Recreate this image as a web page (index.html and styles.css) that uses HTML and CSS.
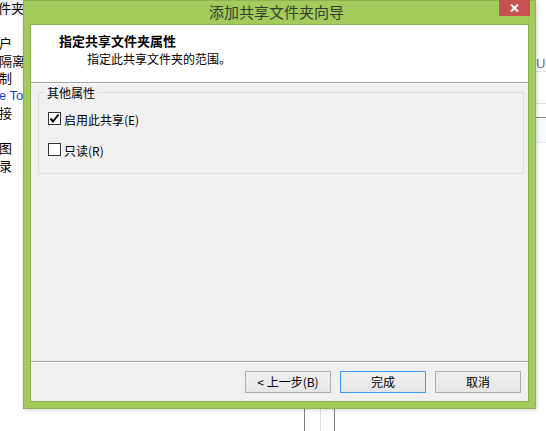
FILE: index.html
```html
<!DOCTYPE html>
<html lang="zh-CN">
<head>
    <meta charset="UTF-8">
    <meta name="viewport" content="width=device-width, initial-scale=1.0">
    <title>添加共享文件夹向导</title>
    <link rel="stylesheet" href="styles.css">
</head>
<body>
    <!-- 背后的资源管理器 -->
    <div class="explorer">
        <div class="nav">
            <div class="nav-head">件夹</div>
            <ul class="nav-list">
                <li>户</li>
                <li>隔离</li>
                <li>制</li>
                <li class="link">e To</li>
                <li>接</li>
                <li>&nbsp;</li>
                <li>图</li>
                <li>录</li>
            </ul>
        </div>
        <div class="pane">
            <div class="pane-text">U)</div>
            <div class="pane-row"></div>
            <div class="pane-sel"></div>
        </div>
        <div class="cols">
            <span class="col-dark"></span>
            <span class="col-light"></span>
            <span class="col-dark"></span>
        </div>
    </div>

    <!-- 向导窗口 -->
    <div class="wizard">
        <div class="titlebar">
            <span></span>
            <span class="title">添加共享文件夹向导</span>
            <button type="button" class="close">
                <svg width="9" height="8" viewBox="0 0 9 8"><path d="M1 0.5 L8 7.5 M8 0.5 L1 7.5" stroke="#fff" stroke-width="2"/></svg>
            </button>
        </div>
        <div class="client">
            <div class="header">
                <h1 class="header-title">指定共享文件夹属性</h1>
                <p class="header-sub">指定此共享文件夹的范围。</p>
            </div>
            <div class="body">
                <div class="group">
                    <div class="group-title">其他属性</div>
                    <label class="check-row first">
                        <span class="box">
                            <svg width="11" height="11" viewBox="0 0 11 11"><path d="M1.5 5.5 L4 8.5 L9.5 1.5" fill="none" stroke="#000" stroke-width="2"/></svg>
                        </span>
                        启用此共享(E)
                    </label>
                    <label class="check-row">
                        <span class="box"></span>
                        只读(R)
                    </label>
                </div>
            </div>
            <div class="footer">
                <button type="button" class="btn">&lt;&nbsp;上一步(B)</button>
                <button type="button" class="btn default">完成</button>
                <button type="button" class="btn">取消</button>
            </div>
        </div>
    </div>
</body>
</html>
```

FILE: styles.css
```css
* {
    box-sizing: border-box;
}

body {
    margin: 0;
    background: #fff;
    font-family: "Noto Sans CJK SC", sans-serif;
    font-size: 12px;
    color: #000;
    position: relative;
    overflow: hidden;
}

/* 资源管理器背景 */
.explorer {
    width: 546px;
    height: 431px;
    display: grid;
    grid-template-columns: 23px 1fr 10px;
    grid-template-rows: 1fr 22px;
    overflow: hidden;
}

.nav {
    grid-column: 1;
    grid-row: 1;
    white-space: nowrap;
    font-size: 13px;
}

.nav-head {
    height: 16px;
    line-height: 16px;
    background: #f0f0f0;
    margin-left: -2px;
}

.nav-list {
    list-style: none;
    margin: 18px 0 0;
    padding: 0;
    line-height: 17.5px;
}

.nav-list li {
    margin-left: -1px;
}

.nav-list .link {
    color: #1a3fd0;
    font-family: "Liberation Sans", sans-serif;
}

.pane {
    grid-column: 3;
    grid-row: 1;
}

.pane-text {
    margin-top: 56px;
    height: 16px;
    line-height: 16px;
    color: #5a6aa0;
    font-family: "Liberation Sans", sans-serif;
    font-size: 13px;
    border-bottom: 1px solid #e0e0e0;
}

.pane-row {
    height: 32px;
    border-bottom: 1px solid #e0e0e0;
}

.pane-sel {
    margin-top: 13px;
    height: 26px;
    border-top: 1px solid #8a8a8a;
    border-bottom: 1px solid #dde8f4;
    background: #f7fafd;
}

.cols {
    grid-column: 2;
    grid-row: 2;
    display: flex;
    padding-left: 281px;
}

.cols span {
    width: 1px;
    height: 100%;
}

.col-dark {
    background: #7f7f7f;
}

.col-light {
    background: #dcdcdc;
    margin: 0 13px 0 15px;
}

/* 向导窗口 */
.wizard {
    position: absolute;
    left: 23px;
    top: 0;
    width: 513px;
    height: 409px;
    background: #a2cb5c;
    border: 1px solid #8db352;
    padding: 0 6px 6px;
    display: flex;
    flex-direction: column;
    box-shadow: 1px 1px 4px rgba(0, 0, 0, 0.18);
}

.titlebar {
    height: 23px;
    display: grid;
    grid-template-columns: 1fr auto 1fr;
    align-items: start;
}

.title {
    font-size: 15px;
    line-height: 22px;
    color: #363d30;
    margin-right: 6px;
}

.close {
    justify-self: end;
    width: 31px;
    height: 16px;
    margin: -1px -1px 0 0;
    padding: 0;
    border: 0;
    background: #c75050;
    display: flex;
    align-items: center;
    justify-content: center;
}

.client {
    flex: 1;
    border: 1px solid #89ae4d;
    background: #f0f0f0;
    display: flex;
    flex-direction: column;
}

.header {
    height: 58px;
    background: #fff;
    border-bottom: 1px solid #a0a0a0;
    padding: 9px 0 0 28px;
}

.header-title {
    margin: 0;
    font-size: 13px;
    font-weight: bold;
    line-height: 14px;
}

.header-sub {
    margin: 4px 0 0 28px;
    font-size: 12px;
    line-height: 14px;
}

.body {
    flex: 1;
    border-top: 1px solid #fff;
}

.group {
    margin: 8px 4px 0 7px;
    border: 1px solid #dcdcdc;
    padding: 0 9px 15px;
}

.group-title {
    display: table;
    margin: -8px 0 0 -3px;
    padding: 0 2px;
    line-height: 16px;
    background: #f0f0f0;
}

.check-row {
    display: flex;
    align-items: center;
    gap: 3px;
    height: 16px;
    margin-top: 15px;
}

.check-row.first {
    margin-top: 10px;
}

.box {
    width: 13px;
    height: 13px;
    margin-top: -1px;
    border: 1px solid #333;
    background: #fff;
    display: flex;
    align-items: center;
    justify-content: center;
}

.footer {
    height: 40px;
    border-top: 1px solid #a0a0a0;
    box-shadow: inset 0 1px 0 #fff;
    display: flex;
    justify-content: flex-end;
    gap: 9px;
    padding: 9px 7px 0 0;
}

.btn {
    width: 86px;
    height: 22px;
    padding: 0;
    border: 1px solid #acacac;
    background: linear-gradient(#f0f0f0, #e5e5e5);
    font-family: "Noto Sans CJK SC", sans-serif;
    font-size: 12px;
    line-height: 18px;
    color: #000;
}

.btn.default {
    border-color: #3c9bf0;
}
```
